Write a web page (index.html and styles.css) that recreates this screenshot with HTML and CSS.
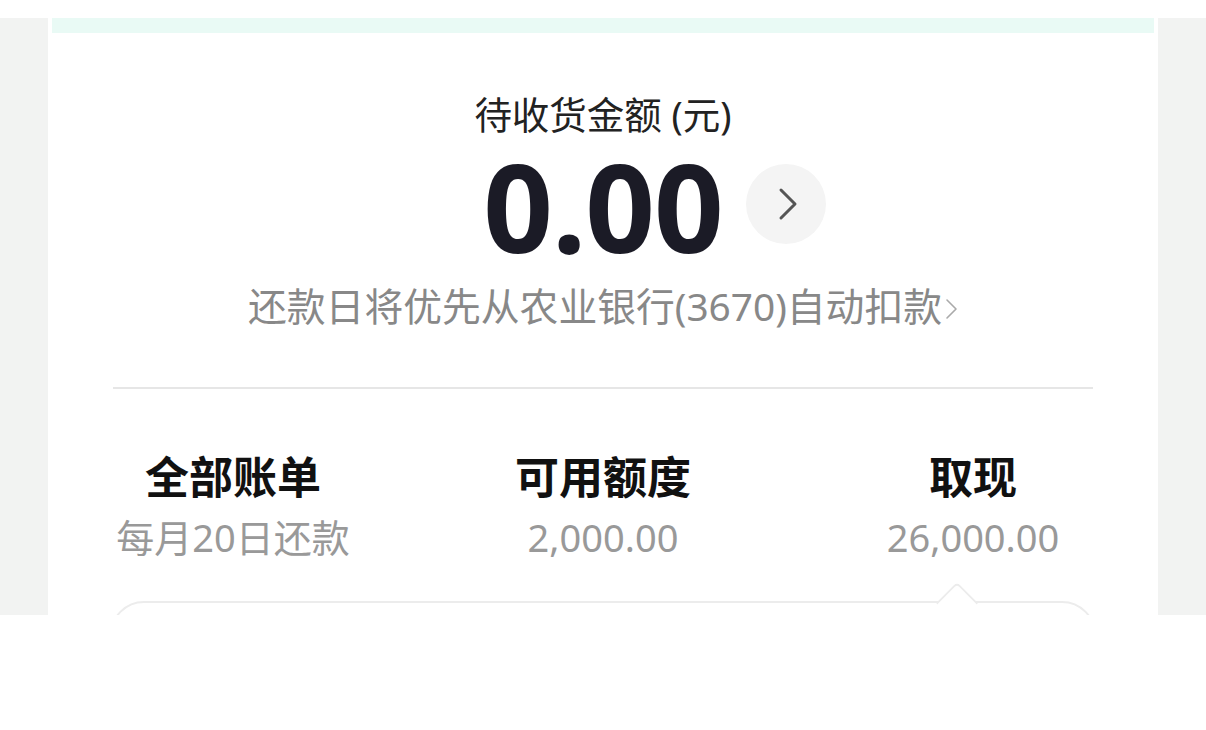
FILE: index.html
```html
<!DOCTYPE html>
<html lang="zh-CN">
<head>
<meta charset="utf-8">
<link rel="stylesheet" href="styles.css">
</head>
<body>
<div class="screen">
  <div class="card">
    <div class="mint"></div>
    <div class="title">待收货金额 (元)</div>
    <div class="amount-row">
      <div class="amount">0.00</div>
      <div class="arrow-btn">
        <svg width="24" height="40" viewBox="0 0 24 40"><path d="M5 6 L19 20 L5 34" fill="none" stroke="#555" stroke-width="3" stroke-linecap="round" stroke-linejoin="round"/></svg>
      </div>
    </div>
    <div class="sub">还款日将优先从农业银行(3670)自动扣款<svg class="chev" width="14" height="26" viewBox="0 0 14 26"><path d="M3 4 L12 13 L3 22" fill="none" stroke="#aaa" stroke-width="1.6" stroke-linecap="round" stroke-linejoin="round"/></svg></div>
    <div class="divider"></div>
    <div class="cols">
      <div class="col">
        <div class="col-title">全部账单</div>
        <div class="col-val">每月20日还款</div>
      </div>
      <div class="col">
        <div class="col-title">可用额度</div>
        <div class="col-val">2,000.00</div>
      </div>
      <div class="col">
        <div class="col-title">取现</div>
        <div class="col-val">26,000.00</div>
      </div>
    </div>
    <div class="panel"><span class="notch"></span></div>
  </div>
</div>
</body>
</html>
```

FILE: styles.css
```css
html, body {
  margin: 0;
  padding: 0;
  background: #ffffff;
}
body {
  font-family: "Noto Sans", "Noto Sans CJK SC", sans-serif;
}
.screen {
  margin-top: 18px;
  height: 597px;
  overflow: hidden;
  background: #f2f3f2;
  display: flex;
  padding: 0 48px;
}
.card {
  flex: 1;
  background: #ffffff;
  display: flex;
  flex-direction: column;
}
.card > * {
  flex-shrink: 0;
}
.mint {
  height: 15px;
  margin: 0 4px;
  background: #e9faf5;
}
.title {
  margin-top: 60px;
  text-align: center;
  font-size: 37.5px;
  line-height: 44px;
  color: #222222;
}
.amount-row {
  margin-top: 8px;
  display: grid;
  grid-template-columns: 1fr auto 1fr;
  align-items: center;
}
.amount {
  grid-column: 2;
  font-size: 122px;
  line-height: 122px;
  font-weight: 700;
  color: #1b1b26;
  letter-spacing: -1px;
}
.arrow-btn {
  grid-column: 3;
  justify-self: start;
  margin-left: 23px;
  margin-top: -4px;
  width: 80px;
  height: 80px;
  border-radius: 50%;
  background: #f4f4f4;
  display: flex;
  align-items: center;
  justify-content: center;
}
.arrow-btn svg {
  margin-left: 4px;
}
.sub {
  margin-top: 15px;
  text-align: center;
  font-size: 38.8px;
  line-height: 48px;
  color: #888888;
}
.chev {
  vertical-align: -1px;
  margin-left: 2px;
}
.divider {
  margin: 57px 65px 0;
  height: 2px;
  background: #e6e6e6;
}
.cols {
  margin-top: 62px;
  display: grid;
  grid-template-columns: 1fr 1fr 1fr;
}
.col {
  display: flex;
  flex-direction: column;
  align-items: center;
}
.col-title {
  font-size: 44px;
  line-height: 52px;
  font-weight: 700;
  color: #111111;
}
.col-val {
  margin-top: 10px;
  font-size: 38px;
  line-height: 48px;
  color: #999999;
}
.panel {
  position: relative;
  margin: 40px 62px 0;
  height: 200px;
  border: 2px solid #ececec;
  border-radius: 34px;
}
.notch {
  position: absolute;
  left: 830px;
  top: -15px;
  width: 28px;
  height: 28px;
  background: #ffffff;
  border-top: 2px solid #ececec;
  border-left: 2px solid #ececec;
  border-top-left-radius: 5px;
  transform: rotate(45deg);
}
```
